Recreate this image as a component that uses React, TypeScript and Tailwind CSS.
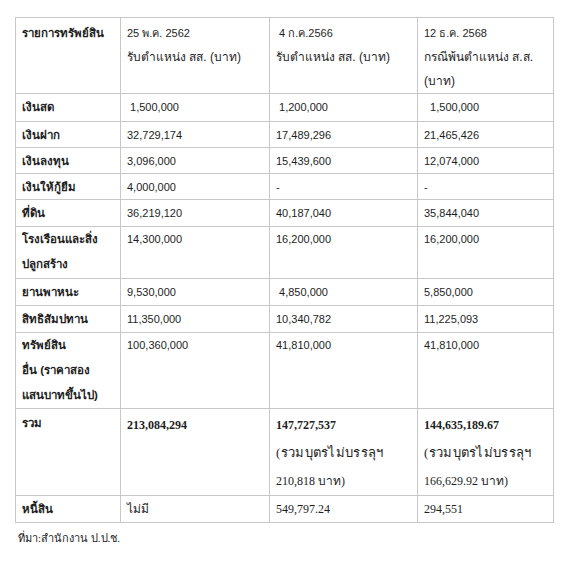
import React from 'react';

type Row = {
  label: string[];
  cells: string[];
  h: string;
  multi?: boolean;
};

const rows: Row[] = [
  { label: ['เงินสด'], cells: [' 1,500,000', ' 1,200,000', '  1,500,000'], h: 'h-[28px]' },
  { label: ['เงินฝาก'], cells: ['32,729,174', '17,489,296', '21,465,426'], h: 'h-[26px]' },
  { label: ['เงินลงทุน'], cells: ['3,096,000', '15,439,600', '12,074,000'], h: 'h-[26px]' },
  { label: ['เงินให้กู้ยืม'], cells: ['4,000,000', '-', '-'], h: 'h-[26px]' },
  { label: ['ที่ดิน'], cells: ['36,219,120', '40,187,040', '35,844,040'], h: 'h-[27px]' },
  { label: ['โรงเรือนและสิ่ง', 'ปลูกสร้าง'], cells: ['14,300,000', '16,200,000', '16,200,000'], h: 'h-[52px]', multi: true },
  { label: ['ยานพาหนะ'], cells: ['9,530,000', ' 4,850,000', '5,850,000'], h: 'h-[27px]' },
  { label: ['สิทธิสัมปทาน'], cells: ['11,350,000', '10,340,782', '11,225,093'], h: 'h-[27px]' },
  {
    label: ['ทรัพย์สิน', 'อื่น (ราคาสอง', 'แสนบาทขึ้นไป)'],
    cells: ['100,360,000', '41,810,000', '41,810,000'],
    h: 'h-[76px]',
    multi: true,
  },
];

const serif = { fontFamily: '"Liberation Serif", "Noto Sans", serif' };
const cell = 'border border-[#c8c8c8] align-top px-[6px]';

export default function App() {
  return (
    <div
      className="w-[581px] h-[566px] bg-white pt-[17px] pl-[15px] text-[#1e1e1e]"
      style={{ fontFamily: '"Liberation Sans", "Noto Sans", sans-serif' }}
    >
      <table className="border-collapse text-[11px]">
        <colgroup>
          <col className="w-[105px]" />
          <col className="w-[149px]" />
          <col className="w-[148px]" />
          <col className="w-[136px]" />
        </colgroup>
        <tbody>
          <tr className="h-[76px]">
            <td className={`${cell} pt-[3px] leading-[24px] font-bold text-[11.5px]`}>รายการทรัพย์สิน</td>
            <td className={`${cell} pt-[3px] leading-[24px]`}>
              <div>25 พ.ค. 2562</div>
              <div className="text-[12px]">รับตำแหน่ง สส. (บาท)</div>
            </td>
            <td className={`${cell} pt-[3px] leading-[24px] whitespace-pre`}>
              <div> 4 ก.ค.2566</div>
              <div className="text-[12px]">รับตำแหน่ง สส. (บาท)</div>
            </td>
            <td className={`${cell} pt-[3px] leading-[24px]`}>
              <div>12 ธ.ค. 2568</div>
              <div className="text-[12px]">กรณีพ้นตำแหน่ง ส.ส.</div>
              <div className="text-[12px]">(บาท)</div>
            </td>
          </tr>
          {rows.map((r) => (
            <tr key={r.label[0]} className={r.h}>
              <td className={`${cell} font-bold text-[11.5px] ${r.multi ? 'pt-0 leading-[25px]' : 'pt-[1px] leading-[24px]'}`}>
                {r.label.map((l) => (
                  <div key={l}>{l}</div>
                ))}
              </td>
              {r.cells.map((c, i) => (
                <td key={i} className={`${cell} whitespace-pre ${r.multi ? 'pt-0 leading-[25px]' : 'pt-[1px] leading-[24px]'}`}>
                  {c}
                </td>
              ))}
            </tr>
          ))}
          <tr className="h-[85px]">
            <td className={`${cell} pt-[2px] leading-[24px] font-bold text-[11.5px]`}>รวม</td>
            <td className={`${cell} pt-[2px] leading-[28px] font-bold text-[12px]`} style={serif}>
              213,084,294
            </td>
            <td className={`${cell} pt-[2px] leading-[28px] text-[12px]`} style={serif}>
              <div className="font-bold">147,727,537</div>
              <div className="text-[13px] tracking-[0.3px]">(รวมบุตรไม่บรรลุฯ</div>
              <div>210,818 บาท)</div>
            </td>
            <td className={`${cell} pt-[2px] leading-[28px] text-[12px]`} style={serif}>
              <div className="font-bold">144,635,189.67</div>
              <div className="text-[13px] tracking-[0.3px]">(รวมบุตรไม่บรรลุฯ</div>
              <div>166,629.92 บาท)</div>
            </td>
          </tr>
          <tr className="h-[27px]">
            <td className={`${cell} pt-[1px] leading-[24px] font-bold text-[11.5px]`}>หนี้สิน</td>
            <td className={`${cell} pt-[1px] leading-[24px] text-[12px]`} style={serif}>ไม่มี</td>
            <td className={`${cell} pt-[1px] leading-[24px] text-[12px]`} style={serif}>549,797.24</td>
            <td className={`${cell} pt-[1px] leading-[24px] text-[12px]`} style={serif}>294,551</td>
          </tr>
        </tbody>
      </table>
      <p className="text-[11px] mt-[5px] pl-[3px] leading-[20px]" style={serif}>
        ที่มา:สำนักงาน ป.ป.ช.
      </p>
    </div>
  );
}
